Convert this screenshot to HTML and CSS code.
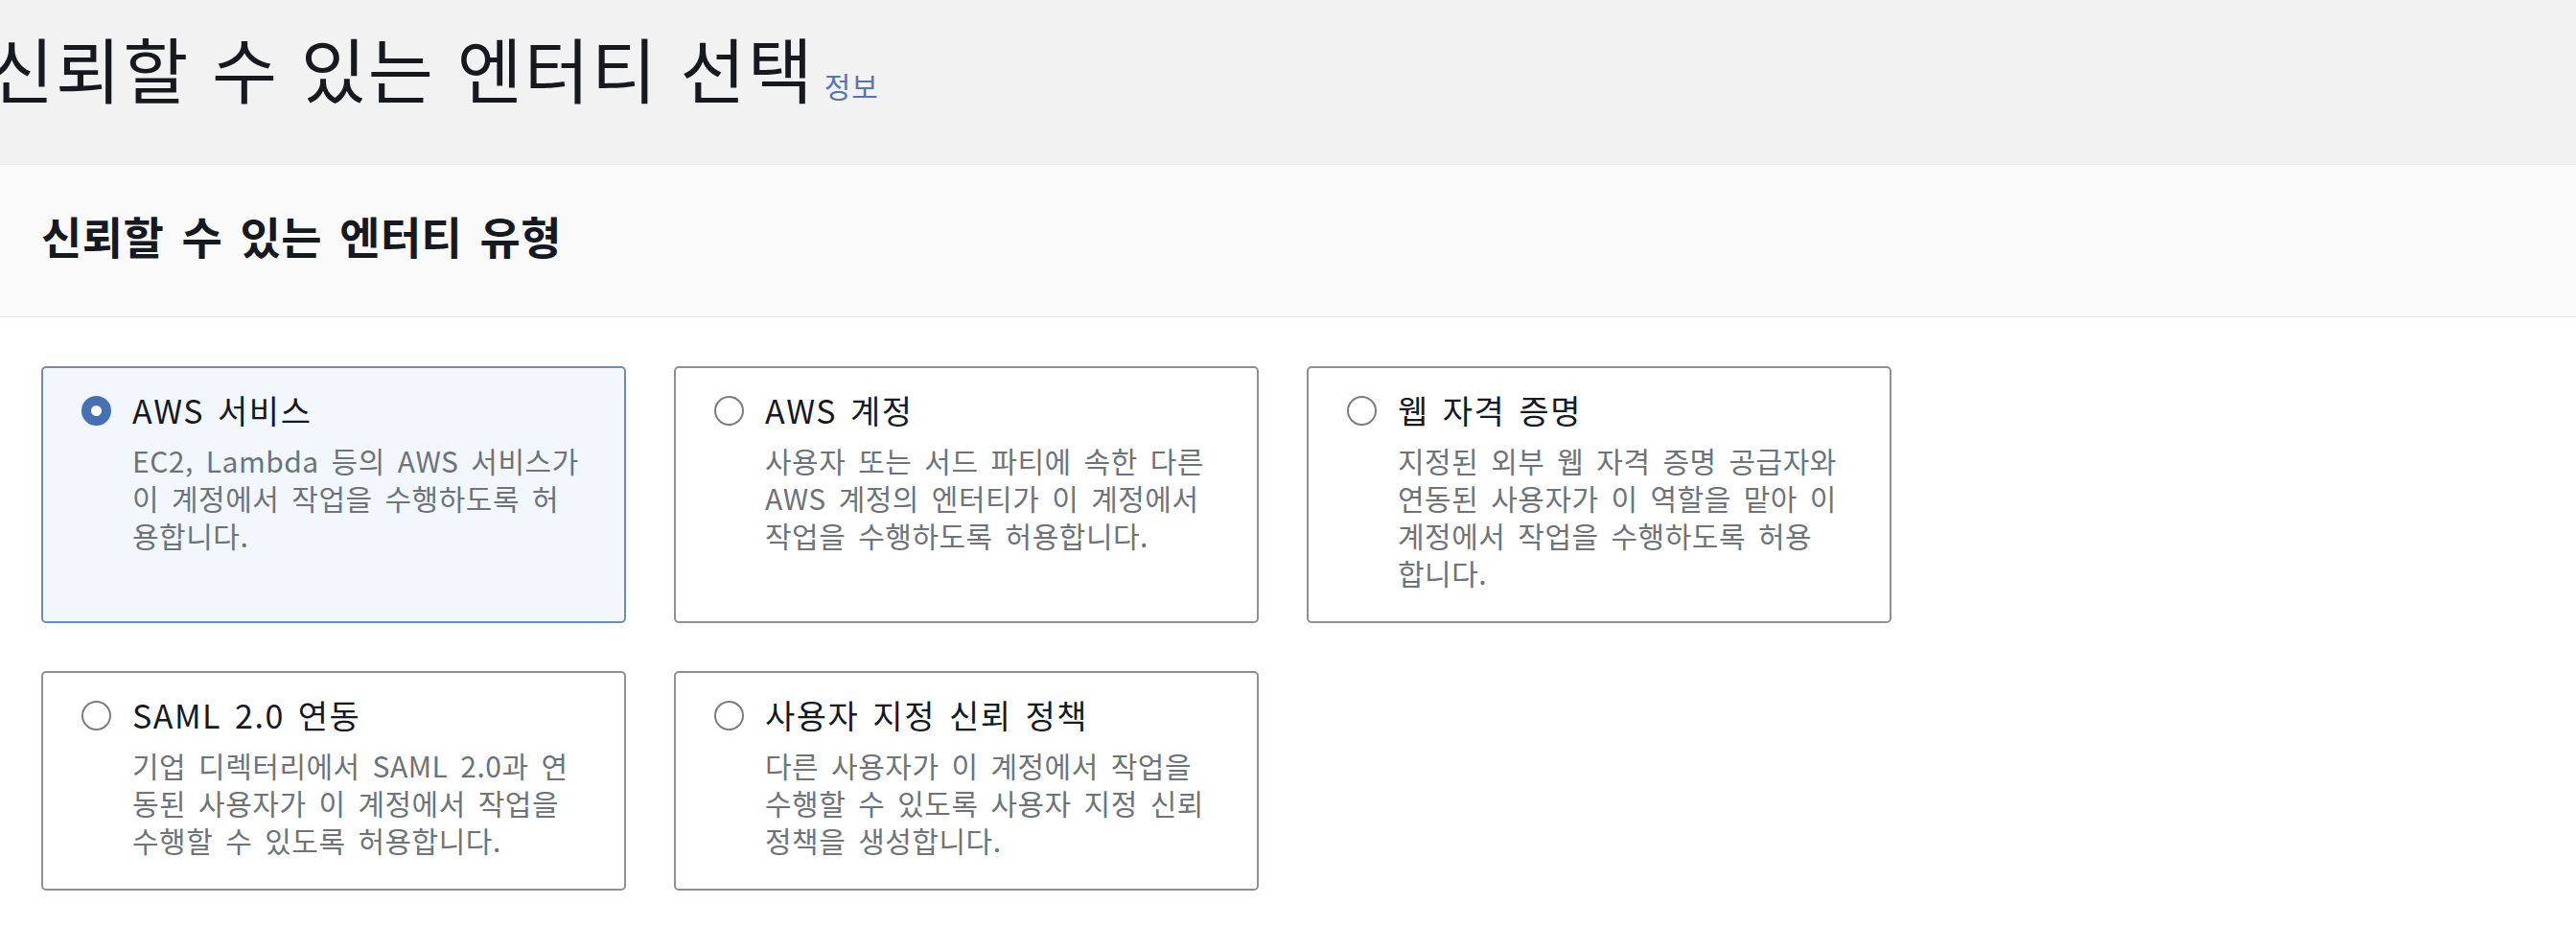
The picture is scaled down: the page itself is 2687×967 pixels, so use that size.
FILE: index.html
```html
<!DOCTYPE html>
<html lang="ko">
<head>
<meta charset="utf-8">
<title>신뢰할 수 있는 엔터티 선택</title>
<link rel="stylesheet" href="styles.css">
</head>
<body>
<header class="page-head">
  <h1 class="page-title">신뢰할 수 있는 엔터티 선택<a class="info" href="#">정보</a></h1>
</header>
<section class="panel">
  <div class="panel-head">
    <h2 class="panel-title">신뢰할 수 있는 엔터티 유형</h2>
  </div>
  <div class="panel-body">
    <div class="tiles">
      <label class="tile selected">
        <span class="radio on"></span>
        <span class="tile-text">
          <span class="tile-title">AWS 서비스</span>
          <span class="tile-desc">EC2, Lambda 등의 AWS 서비스가<br>이 계정에서 작업을 수행하도록 허<br>용합니다.</span>
        </span>
      </label>
      <label class="tile">
        <span class="radio"></span>
        <span class="tile-text">
          <span class="tile-title">AWS 계정</span>
          <span class="tile-desc">사용자 또는 서드 파티에 속한 다른<br>AWS 계정의 엔터티가 이 계정에서<br>작업을 수행하도록 허용합니다.</span>
        </span>
      </label>
      <label class="tile">
        <span class="radio"></span>
        <span class="tile-text">
          <span class="tile-title">웹 자격 증명</span>
          <span class="tile-desc">지정된 외부 웹 자격 증명 공급자와<br>연동된 사용자가 이 역할을 맡아 이<br>계정에서 작업을 수행하도록 허용<br>합니다.</span>
        </span>
      </label>
      <label class="tile">
        <span class="radio"></span>
        <span class="tile-text">
          <span class="tile-title">SAML 2.0 연동</span>
          <span class="tile-desc">기업 디렉터리에서 SAML 2.0과 연<br>동된 사용자가 이 계정에서 작업을<br>수행할 수 있도록 허용합니다.</span>
        </span>
      </label>
      <label class="tile">
        <span class="radio"></span>
        <span class="tile-text">
          <span class="tile-title">사용자 지정 신뢰 정책</span>
          <span class="tile-desc">다른 사용자가 이 계정에서 작업을<br>수행할 수 있도록 사용자 지정 신뢰<br>정책을 생성합니다.</span>
        </span>
      </label>
    </div>
  </div>
</section>
</body>
</html>
```
FILE: styles.css
```css
html, body {
  margin: 0;
  padding: 0;
}
body {
  width: 2687px;
  height: 967px;
  overflow: hidden;
  background: #ffffff;
  font-family: "Noto Sans CJK KR", "Noto Sans", sans-serif;
  color: #16191f;
}
.page-head {
  background: #f2f2f2;
  height: 171px;
  box-sizing: border-box;
  padding-top: 26px;
}
.page-title {
  margin: 0 0 0 -12px;
  font-size: 74px;
  line-height: 88px;
  font-weight: 400;
  letter-spacing: 2px;
  word-spacing: 0;
  color: #16191f;
  white-space: nowrap;
}
.info {
  font-size: 30px;
  letter-spacing: 1px;
  word-spacing: 0;
  color: #5576b4;
  text-decoration: none;
  margin-left: 10px;
}
.panel-head {
  background: #fafafa;
  border-top: 1px solid #ebebeb;
  border-bottom: 1px solid #e9e9e9;
  height: 160px;
  box-sizing: border-box;
  padding: 45px 43px 0 43px;
}
.panel-title {
  margin: 0;
  font-size: 46px;
  line-height: 56px;
  font-weight: 700;
  letter-spacing: 0.4px;
  word-spacing: 5px;
  color: #16191f;
}
.panel-body {
  padding: 51px 43px 0 43px;
}
.tiles {
  display: grid;
  grid-template-columns: 610px 610px 610px;
  column-gap: 50px;
  row-gap: 50px;
}
.tile {
  display: flex;
  align-items: flex-start;
  gap: 22px;
  border: 2px solid #8f8f8f;
  border-radius: 5px;
  padding: 23px 20px 31px 40px;
  background: #ffffff;
  box-sizing: border-box;
}
.tile.selected {
  border-color: #6c8dbb;
  background: #f1f7fc;
}
.radio {
  flex: none;
  width: 31px;
  height: 31px;
  margin-top: 6px;
  border: 2px solid #7d7d7d;
  border-radius: 50%;
  box-sizing: border-box;
  background: #ffffff;
}
.radio.on {
  border: 10px solid #4670b2;
  background: #ffffff;
}
.tile-text {
  display: flex;
  flex-direction: column;
}
.tile-title {
  font-size: 34px;
  line-height: 42px;
  letter-spacing: 1.5px;
  word-spacing: 3px;
  color: #16191f;
  white-space: nowrap;
}
.tile-desc {
  margin-top: 12px;
  font-size: 30px;
  line-height: 39px;
  letter-spacing: 0.5px;
  word-spacing: 4px;
  color: #6e7378;
  white-space: nowrap;
}
```
